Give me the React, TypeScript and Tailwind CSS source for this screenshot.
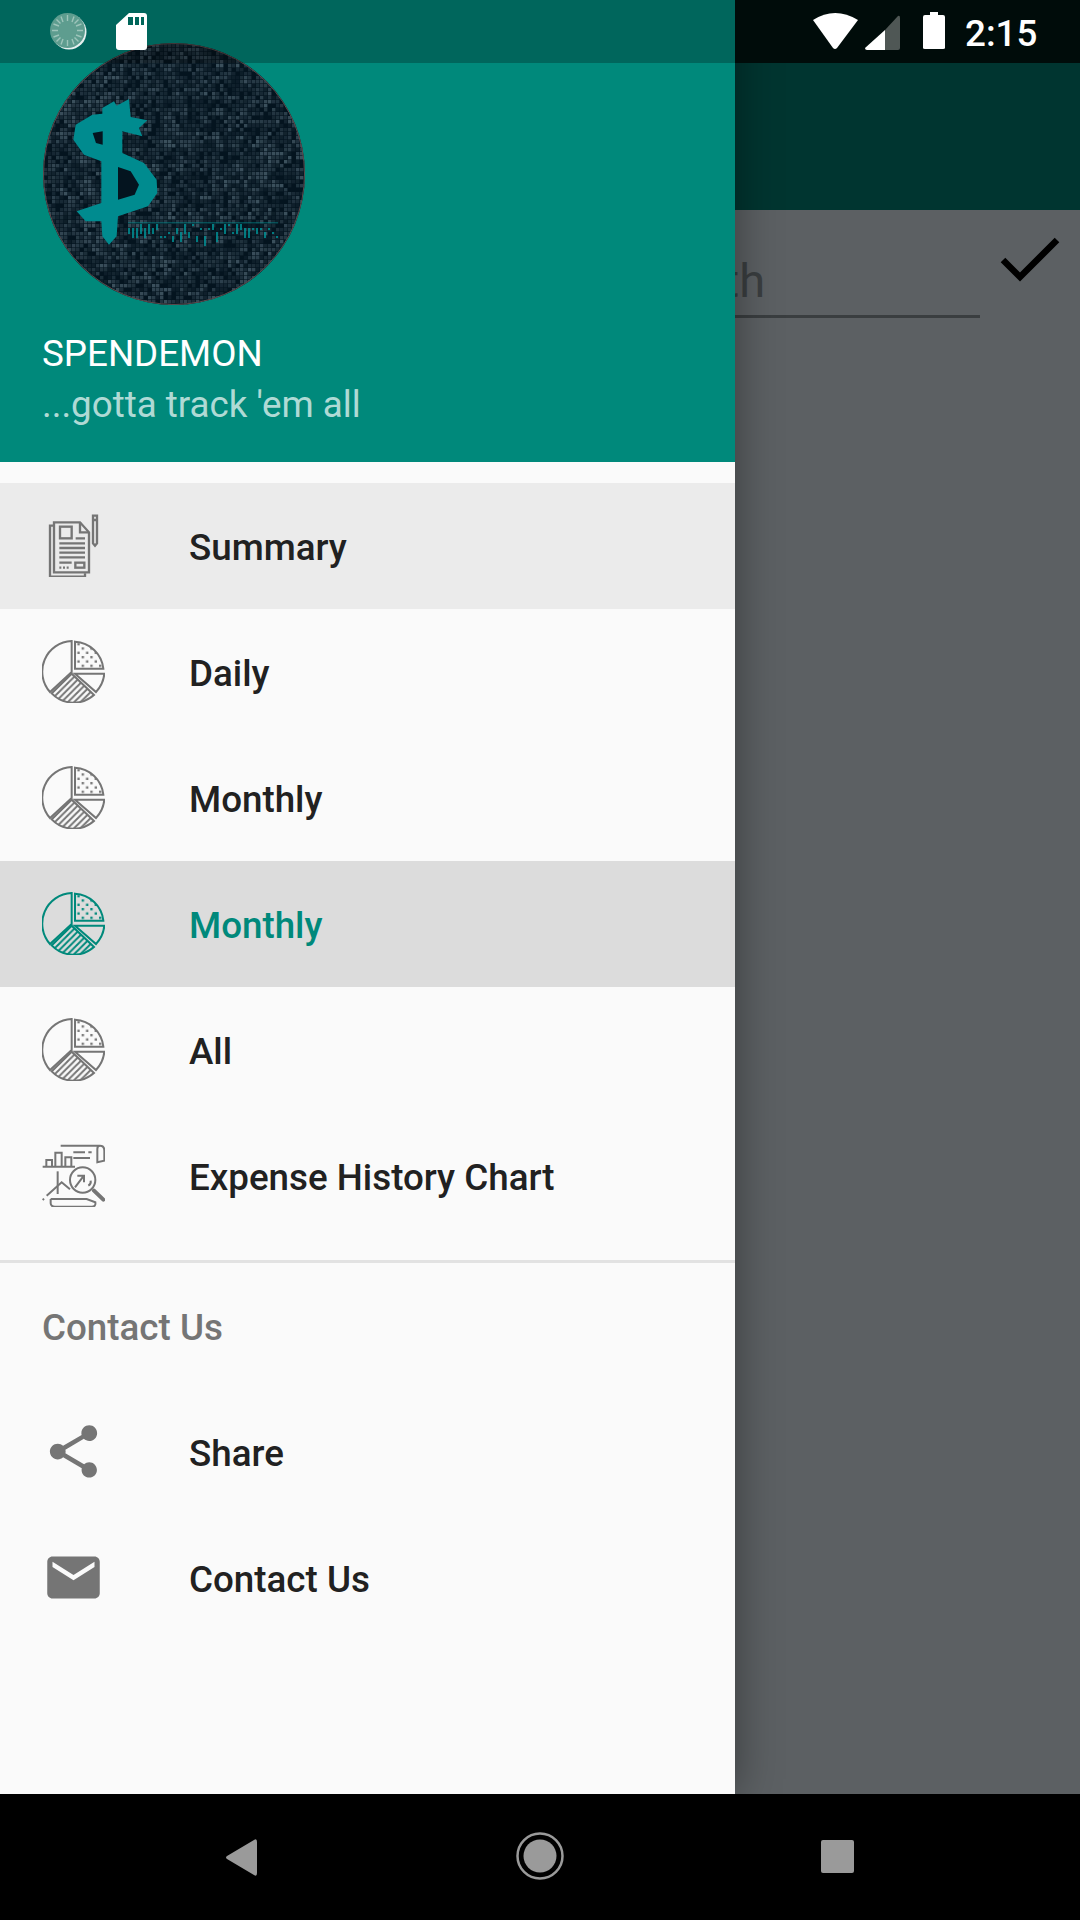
const rows = [
  { label: "Summary", icon: "doc", state: "hover" },
  { label: "Daily", icon: "pie", state: "" },
  { label: "Monthly", icon: "pie", state: "" },
  { label: "Monthly", icon: "pie", state: "active" },
  { label: "All", icon: "pie", state: "" },
  { label: "Expense History Chart", icon: "chart", state: "" },
];

// seeded so the logo texture is the same on every run
function noise(seed: number) {
  const x = Math.sin(seed * 127.1 + 11.7) * 43758.5453;
  return x - Math.floor(x);
}

const logoCells: { x: number; y: number; o: number }[] = [];
for (let y = 0; y < 66; y++) {
  for (let x = 0; x < 66; x++) {
    const clump = 0.35 + 0.65 * noise(Math.floor(x / 3) * 71 + Math.floor(y / 2) * 13 + 5);
    const o = noise(x * 31 + y * 977 + 3) * clump;
    if (o > 0.1) logoCells.push({ x: x * 4, y: y * 4, o: Math.min(o * 0.95, 0.8) });
  }
}

const logoText: { x: number; y: number; h: number }[] = [];
for (let i = 0; i < 38; i++) {
  logoText.push({
    x: 84 + i * 4,
    y: 180 + Math.floor(noise(i + 40) * 4) * 4,
    h: 2 + Math.floor(noise(i + 90) * 3) * 4,
  });
}

function Logo() {
  return (
    <svg width="262" height="262" viewBox="-1 -1 262 262" className="block">
      <defs>
        <clipPath id="logoClip">
          <circle cx="130" cy="130" r="131" />
        </clipPath>
      </defs>
      <g clipPath="url(#logoClip)">
        <rect x="-1" y="-1" width="262" height="262" fill="#04141f" />
        {logoCells.map((c, i) => (
          <rect key={i} x={c.x} y={c.y} width="3.4" height="3.4" fill="#4a5f6c" opacity={c.o} />
        ))}
        <g transform="scale(0.3333) translate(-40,-43)" fill="#008b8f" stroke="none">
          <path d="M215 235 L250 215 L258 228 L295 208 L300 262 L350 272 L325 295 L335 320 L275 305 L275 370 L340 400 L378 450 L380 490 L352 530 L262 560 L258 620 L235 645 L215 620 L212 575 L165 575 L138 545 L212 520 L212 395 L160 375 L128 330 L135 285 L185 255 L215 252 Z" />
        </g>
        <g transform="scale(0.3333) translate(-40,-43)" fill="#04141f" stroke="none">
          <path d="M186 310 L216 305 L216 345 L196 340 Z" />
          <path d="M262 412 L300 425 L325 465 L312 495 L262 510 Z" />
        </g>
        {logoText.map((t, i) => (
          <rect key={i} x={t.x} y={t.y} width="2" height={t.h} fill="#008b8f" opacity="0.85" />
        ))}
        <rect x="84" y="178" width="150" height="1.500" fill="#008b8f" opacity="0.45" />
      </g>
      <circle cx="130" cy="130" r="130.500" fill="none" stroke="#5c4a4c" strokeWidth="1" />
    </svg>
  );
}

function PieIcon({ color, id }: { color: string; id: string }) {
  return (
    <svg width="63" height="63" viewBox="66 449 189 189" fill="none" stroke={color} strokeWidth="6">
      <defs>
        <pattern id={`hatch-${id}`} width="19" height="19" patternUnits="userSpaceOnUse">
          <path d="M-5 5 L5 -5 M-5 24 L24 -5 M14 24 L24 14" stroke={color} strokeWidth="6" />
        </pattern>
        <pattern id={`dots-${id}`} width="26" height="26" patternUnits="userSpaceOnUse">
          <rect x="3" y="3" width="7" height="7" fill={color} stroke="none" />
          <rect x="16" y="16" width="7" height="7" fill={color} stroke="none" />
        </pattern>
      </defs>
      <path d="M155 452 A92 92 0 0 0 90 605 L155 545 Z" />
      <path d="M155 550 L95 609 A92 92 0 0 0 222 614 Z" fill={`url(#hatch-${id})`} />
      <path d="M165 550 H253 A92 92 0 0 1 228 605 Z" />
      <path d="M165 454 V535 H250 A90 90 0 0 0 165 454 Z" fill={`url(#dots-${id})`} />
    </svg>
  );
}

function DocIcon() {
  return (
    <svg width="63" height="63" viewBox="66 70 189 189" fill="none" stroke="#757575" strokeWidth="7">
      <path d="M100 105 H90 V258 H195 V248" />
      <path d="M180 95 H102 V245 H207 V125 Z" />
      <path d="M180 95 V125 H207" />
      <rect x="120" y="108" width="35" height="35" />
      <path d="M167 143 H195 M118 158 H195 M118 172 H195 M118 186 H195 M118 200 H195 M118 216 H155" />
      <rect x="166" y="216" width="27" height="15" />
      <path d="M118 231 H146" strokeDasharray="6 5" />
      <path d="M219 88 V158 L225 165 L231 158 V88 M219 75 H231 V88 H219 Z" />
    </svg>
  );
}

function ChartIcon() {
  return (
    <svg width="63" height="63" viewBox="66 40 189 189" fill="none" stroke="#757575" strokeWidth="6">
      <path d="M122 45 H240 Q253 45 253 60 V90 L232 95 V55 Q232 45 240 45" />
      <path d="M160 65 H195 M205 65 H215 M160 82 H210" />
      <path d="M68 108 H165" />
      <path d="M79 108 V88 H96 V108 M106 108 V66 H125 V108 M136 108 V80 H154 V108" />
      <path d="M113 122 V190" />
      <path d="M68 208 L72 204 M80 195 L125 155 L150 176" />
      <circle cx="188" cy="148" r="38" />
      <path d="M165 170 L190 137 M172 135 H192 V155" />
      <path d="M205 165 Q214 160 212 150" />
      <path d="M222 180 L250 207" strokeWidth="12" strokeLinecap="round" />
      <path d="M92 205 V218 Q92 228 105 228 H215 Q228 228 226 215 L200 205 H92" />
    </svg>
  );
}

function RowIcon({ icon, color, id }: { icon: string; color: string; id: string }) {
  if (icon === "doc") return <DocIcon />;
  if (icon === "chart") return <ChartIcon />;
  return <PieIcon color={color} id={id} />;
}

function StatusIcons() {
  return (
    <div className="absolute top-0 left-0 z-20 flex h-[63px] w-full items-start">
      <div className="flex h-[63px] w-[735px] shrink-0 items-start bg-black/25 pt-[13px] pl-[50px]">
        <svg width="38" height="38" viewBox="0 0 38 38">
          <circle cx="19" cy="19" r="17.500" fill="#fff" opacity="0.9" />
          <circle cx="17.500" cy="17.500" r="17.500" fill="#5e9d8f" />
          <g stroke="#b9d6cd" strokeWidth="1.400" opacity="0.7">
            <path d="M17.500 2 V8 M17.500 27 V33 M2 17.500 H8 M27 17.500 H33 M6.500 6.500 L10.500 10.500 M24.500 24.500 L28.500 28.500 M6.500 28.500 L10.500 24.500 M24.500 10.500 L28.500 6.500 M11 3.500 L13 9 M22 26 L24 31.500 M3.500 11 L9 13 M26 22 L31.500 24 M3.500 24 L9 22 M26 13 L31.500 11 M11 31.500 L13 26 M22 9 L24 3.500" />
          </g>
        </svg>
        <svg width="31" height="38" viewBox="0 0 31 38" className="ml-[28px]">
          <path d="M13 0 H28 Q31 0 31 3 V34 Q31 37 28 37 H3 Q0 37 0 34 V12 Z" fill="#fff" />
          <path d="M12 4 h5 v8 h-5 z M19 4 h4 v8 h-4 z M25 4 h3 v8 h-3 z" fill="#00665a" />
        </svg>
      </div>
      <div className="flex h-[63px] flex-1 items-start bg-[#000c0a] pt-[12px] pl-[78px]">
        <svg width="45" height="38" viewBox="0 0 45 38" className="mt-px">
          <path d="M0 7 Q22 -7 45 7 L24 35 Q22 37 20 35 Z" fill="#fff" />
        </svg>
        <svg width="35" height="36" viewBox="0 0 35 36" className="mt-[3px] ml-[7px]">
          <path d="M20 15 L33 1 Q35 0 35 3 V33 Q35 35 33 35 H20 Z" fill="#4f5755" />
          <path d="M0 33 L20 15 V35 H2 Q0 35 0 33 Z" fill="#fff" />
        </svg>
        <svg width="22" height="38" viewBox="0 0 22 38" className="ml-[23px]">
          <path d="M7 0 H15 V3 H20 Q22 3 22 5 V36 Q22 37 20 37 H2 Q0 37 0 36 V5 Q0 3 2 3 H7 Z" fill="#fff" />
        </svg>
        <span className="mt-[2px] ml-[20px] text-[36.75px] leading-[39px] font-medium text-white">2:15</span>
      </div>
    </div>
  );
}

function NavRow({ label, icon, state, id }: { label: string; icon: string; state: string; id: string }) {
  const active = state === "active";
  return (
    <div
      className={`flex h-[126px] items-center pl-[42px] ${active ? "bg-[#dcdcdc]" : state === "hover" ? "bg-[#ebebeb]" : ""}`}
    >
      <div className="mb-[2px]">
        <RowIcon icon={icon} color={active ? "#00897b" : "#757575"} id={id} />
      </div>
      <span className={`ml-[84px] pt-[4px] text-[36.75px] font-medium ${active ? "text-[#00897b]" : "text-[#212121]"}`}>
        {label}
      </span>
    </div>
  );
}

function Drawer() {
  return (
    <div className="absolute top-0 bottom-[126px] left-0 z-10 flex w-[735px] flex-col bg-[#fafafa] shadow-[0_0_42px_rgba(0,0,0,0.4)]">
      <div className="h-[462px] bg-[#00897b] pt-[43px] pl-[42px]">
        <div className="ml-px">
          <Logo />
        </div>
        <div className="mt-[24px] text-[36.75px] leading-[49px] text-white">SPENDEMON</div>
        <div className="mt-[2px] text-[36.75px] leading-[49px] text-white/70">...gotta track 'em all</div>
      </div>
      <div className="pt-[21px]">
        {rows.map((r, i) => (
          <NavRow key={i} label={r.label} icon={r.icon} state={r.state} id={`r${i}`} />
        ))}
      </div>
      <div className="mt-[21px] h-[3px] bg-[#e2e2e2]" />
      <div className="flex h-[126px] items-center pl-[42px] pt-[4px] text-[36.75px] font-medium text-[#757575]">
        Contact Us
      </div>
      <div className="flex h-[126px] items-center pl-[42px]">
        <svg width="63" height="63" viewBox="0 0 24 24" fill="#757575" className="mb-[2px]">
          <path d="M18 16.08c-.76 0-1.44.3-1.96.77L8.91 12.7c.05-.23.09-.46.09-.7s-.04-.47-.09-.7l7.05-4.11c.54.5 1.25.81 2.04.81 1.66 0 3-1.34 3-3s-1.34-3-3-3-3 1.34-3 3c0 .24.04.47.09.7L8.04 9.81C7.5 9.31 6.79 9 6 9c-1.66 0-3 1.34-3 3s1.34 3 3 3c.79 0 1.5-.31 2.04-.81l7.12 4.16c-.05.21-.08.43-.08.65 0 1.61 1.31 2.92 2.92 2.92 1.61 0 2.92-1.31 2.92-2.92s-1.31-2.92-2.92-2.92z" />
        </svg>
        <span className="ml-[84px] pt-[4px] text-[36.75px] font-medium text-[#212121]">Share</span>
      </div>
      <div className="flex h-[126px] items-center pl-[42px]">
        <svg width="63" height="63" viewBox="0 0 24 24" fill="#757575" className="mb-[2px]">
          <path d="M20 4H4c-1.1 0-1.99.9-1.99 2L2 18c0 1.1.9 2 2 2h16c1.1 0 2-.9 2-2V6c0-1.1-.9-2-2-2zm0 4l-8 5-8-5V6l8 5 8-5v2z" />
        </svg>
        <span className="ml-[84px] pt-[4px] text-[36.75px] font-medium text-[#212121]">Contact Us</span>
      </div>
    </div>
  );
}

export default function App() {
  return (
    <div className="relative flex h-[1920px] w-[1080px] flex-col overflow-hidden bg-black font-['Roboto',sans-serif]">
      <StatusIcons />
      <div className="h-[63px] shrink-0" />
      <div className="h-[147px] shrink-0 bg-[#003530]" />
      <div className="flex flex-1 items-start bg-[#5c6063] pt-[26px] pl-[630px]">
        <div className="mt-[12px] w-[350px] border-b-[3px] border-[#3a3e40] pb-[1px]">
          <span className="block text-[47px] leading-[66px] text-[#3a3e40]">Month</span>
        </div>
        <svg width="60" height="48" viewBox="0 0 60 48" fill="none" stroke="#000" strokeWidth="6.500" className="ml-[20px]">
          <path d="M3 24 L20 41 L57 4" />
        </svg>
      </div>
      <Drawer />
      <div className="relative z-20 flex h-[126px] shrink-0 items-center bg-black">
        <svg width="32" height="37" viewBox="0 0 32 37" className="absolute top-[45px] left-[226px]">
          <path d="M1 20 Q-1 18.500 1 17 L28 1 Q31 -1 31 3 V34 Q31 38 28 36 Z" fill="#9a9a9a" />
        </svg>
        <svg width="48" height="48" viewBox="0 0 48 48" className="absolute top-[38px] left-[516px]">
          <circle cx="24" cy="24" r="22.500" fill="none" stroke="#9a9a9a" strokeWidth="2.500" />
          <circle cx="24" cy="24" r="16.500" fill="#9a9a9a" />
        </svg>
        <div className="absolute top-[46px] left-[821px] h-[33px] w-[33px] rounded-[2px] bg-[#9a9a9a]" />
      </div>
    </div>
  );
}
